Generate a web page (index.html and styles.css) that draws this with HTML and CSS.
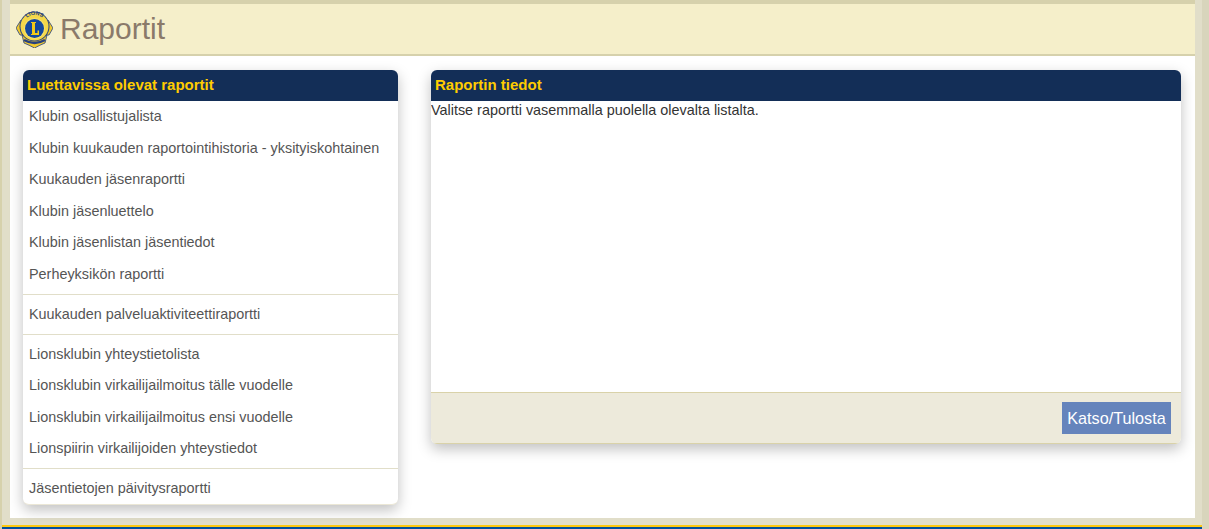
FILE: index.html
```html
<!DOCTYPE html>
<html lang="fi">
<head>
    <meta charset="UTF-8">
    <title>Raportit</title>
    <link rel="stylesheet" href="styles.css">
</head>
<body>
<div class="page">
    <div class="title-bar">
        <svg class="logo" width="37" height="37" viewBox="0 0 37 37">
            <!-- side wings -->
            <path d="M0 17 L5 9 L9 12 L9 24 L4 24 Z M37 17 L32 9 L28 12 L28 24 L33 24 Z" fill="#f0c92e" stroke="#27417f" stroke-width=".8"/>
            <!-- lower shield -->
            <path d="M6 24 L31 24 L29 32 Q24 34 18.500 37 Q13 34 8 32 Z" fill="#f0c92e" stroke="#27417f" stroke-width=".8"/>
            <path d="M8 29 Q18.500 35 29 29" fill="none" stroke="#27417f" stroke-width="2.500"/>
            <!-- rings -->
            <circle cx="18.500" cy="15.500" r="15" fill="#27417f"/>
            <circle cx="18.500" cy="15.500" r="14" fill="#f5d84a"/>
            <circle cx="18.500" cy="17.500" r="10.500" fill="#f7e26e"/>
            <circle cx="18.500" cy="17.500" r="9.500" fill="#14489c"/>
            <path d="M15 11 H20 V12 H19 V22 H21.500 V19.500 H23 V24 H15 V23 H16 V12 H15 Z" fill="#f3c916"/>
            <path id="arc" d="M7 12.500 A12 12 0 0 1 30 12.500" fill="none"/>
            <text class="logo-text"><textPath href="#arc" startOffset="50%" text-anchor="middle">LIONS</textPath></text>
        </svg>
        <h1 class="title">Raportit</h1>
    </div>
    <div class="content">
        <div class="panel panel-list">
            <div class="panel-head">Luettavissa olevat raportit</div>
            <ul class="report-group">
                <li>Klubin osallistujalista</li>
                <li>Klubin kuukauden raportointihistoria - yksityiskohtainen</li>
                <li>Kuukauden jäsenraportti</li>
                <li>Klubin jäsenluettelo</li>
                <li>Klubin jäsenlistan jäsentiedot</li>
                <li>Perheyksikön raportti</li>
            </ul>
            <ul class="report-group">
                <li>Kuukauden palveluaktiviteettiraportti</li>
            </ul>
            <ul class="report-group">
                <li>Lionsklubin yhteystietolista</li>
                <li>Lionsklubin virkailijailmoitus tälle vuodelle</li>
                <li>Lionsklubin virkailijailmoitus ensi vuodelle</li>
                <li>Lionspiirin virkailijoiden yhteystiedot</li>
            </ul>
            <ul class="report-group">
                <li>Jäsentietojen päivitysraportti</li>
            </ul>
        </div>
        <div class="panel panel-detail">
            <div class="panel-head">Raportin tiedot</div>
            <div class="detail-body">Valitse raportti vasemmalla puolella olevalta listalta.</div>
            <div class="detail-foot">
                <button class="button" type="button">Katso/Tulosta</button>
            </div>
        </div>
    </div>
</div>
<div class="foot-strip"></div>
</body>
</html>
```
FILE: styles.css
```css
html, body {
    height: 100%;
}
body {
    margin: 0;
    font-family: "Liberation Sans", Arial, sans-serif;
    font-size: 14.4px;
    color: #555;
    background: #e1dec9;
    border-left: 2px solid #d6d1ac;
    border-right: 7px solid #d8d5bc;
    box-sizing: border-box;
    display: flex;
    flex-direction: column;
    overflow: hidden;
}
.page {
    height: 518px;
    flex: none;
    margin: 0 7px 0 8px;
    background: #fff;
    border-top: 4px solid #d6d1ac;
    box-sizing: border-box;
}
.title-bar {
    height: 52px;
    box-sizing: border-box;
    background: #f5efca;
    border-bottom: 2px solid #d6d1ac;
    display: flex;
    align-items: center;
    padding-left: 6px;
}
.logo {
    margin-right: 7px;
    flex: none;
}
.logo-text {
    font-size: 5.5px;
    font-weight: bold;
    fill: #27417f;
}
.title {
    margin: 0;
    font-size: 30px;
    font-weight: normal;
    color: #8a7a6a;
}
.content {
    display: flex;
    align-items: flex-start;
    padding: 14px 14px 0 13px;
    gap: 33px;
}
.panel {
    background: #fff;
    border-radius: 6px;
    box-shadow: 0 5px 14px rgba(0, 0, 0, .25);
    overflow: hidden;
}
.panel-list {
    width: 375px;
    height: 435px;
    border-bottom: 1px solid #ebe7d6;
    box-sizing: border-box;
}
.panel-detail {
    width: 750px;
    height: 374px;
    display: flex;
    flex-direction: column;
}
.panel-head {
    height: 31.25px;
    line-height: 30px;
    padding-left: 4px;
    flex: none;
    background: #132e57;
    color: #ffcc00;
    font-size: 15px;
    font-weight: bold;
}
.report-group {
    list-style: none;
    margin: 0 0 4px;
    padding: 0 0 3.5px;
    border-bottom: 1px solid #e1dec9;
}
.report-group:last-child {
    border-bottom: 0;
    margin-bottom: 0;
}
.report-group li {
    height: 31.5px;
    line-height: 31.75px;
    padding-left: 6px;
    white-space: nowrap;
}
.detail-body {
    flex: 1;
    line-height: 18px;
    color: #333;
}
.detail-foot {
    height: 52px;
    flex: none;
    box-sizing: border-box;
    background: #edeadb;
    border-top: 1px solid #d9d2a9;
    border-bottom: 1px solid #d9d2a9;
    display: flex;
    justify-content: flex-end;
    align-items: flex-start;
    padding: 9px 10px 0 0;
}
.button {
    width: 109px;
    height: 32px;
    padding: 0;
    border: 0;
    background: #6584bc;
    color: #fff;
    font-family: "Liberation Sans", Arial, sans-serif;
    font-size: 16.2px;
}
.foot-strip {
    height: 4px;
    flex: none;
    margin-top: 7px;
    background: linear-gradient(#fdc80f 2px, #00509e 2px);
}
```
